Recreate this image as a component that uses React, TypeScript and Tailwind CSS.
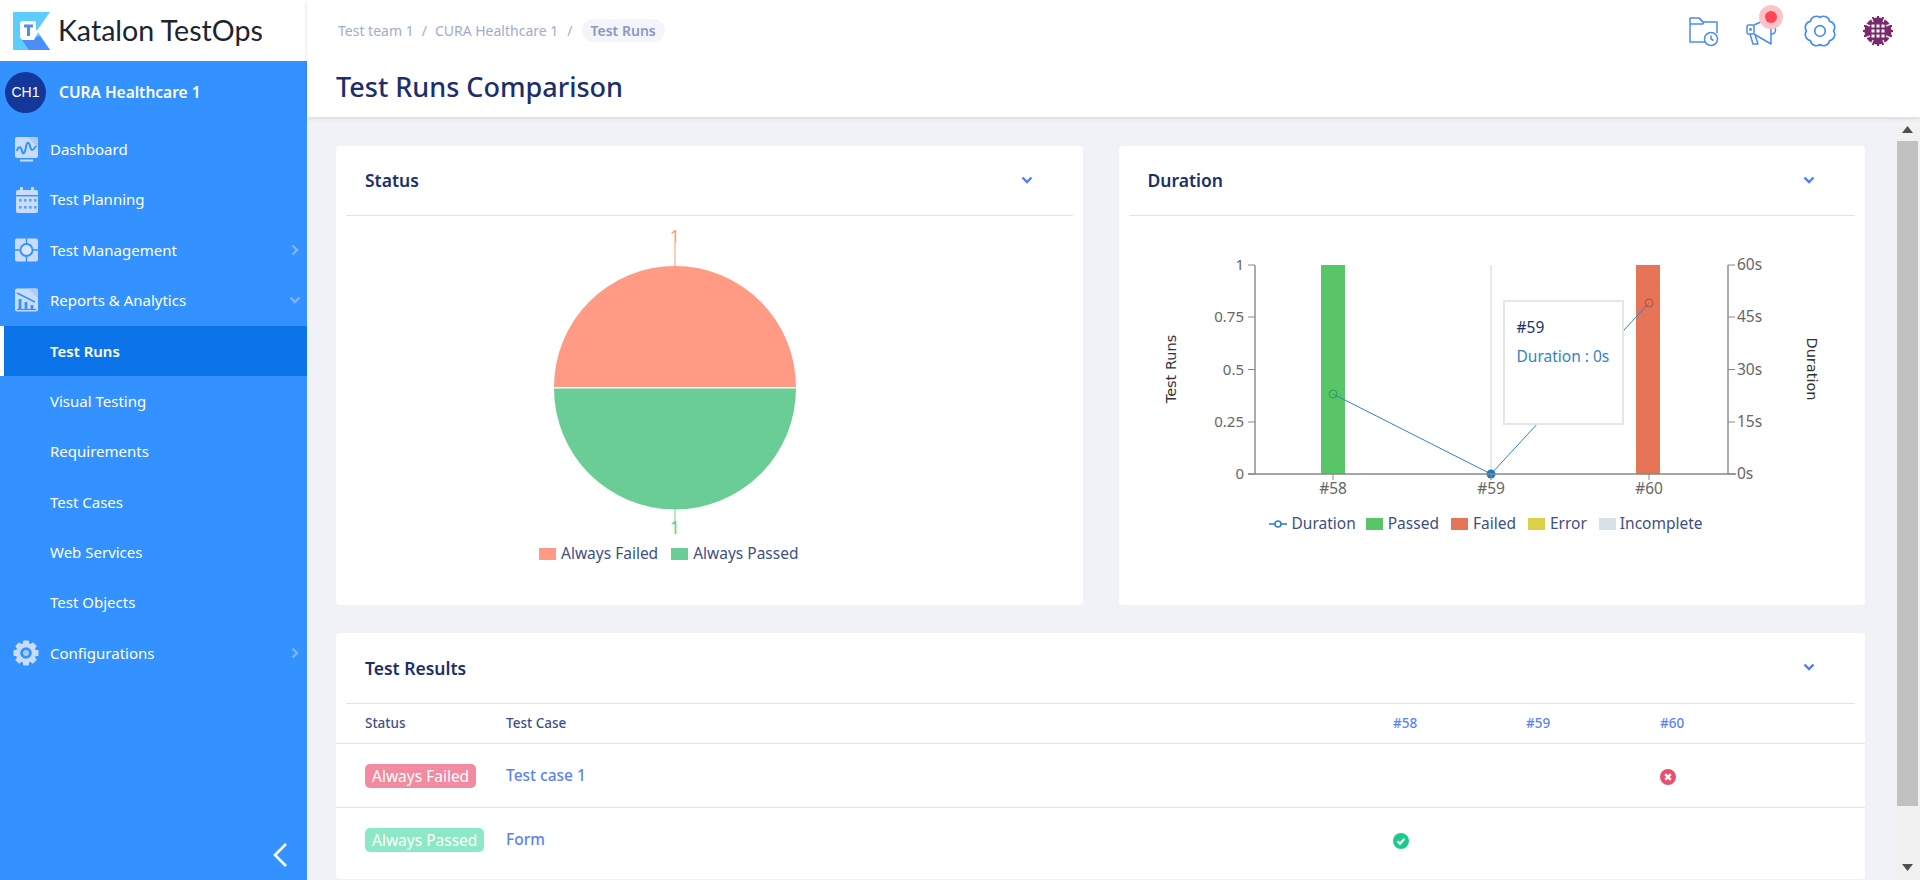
import { ReactNode } from 'react'

const BLUE = '#3392ff'

function DashboardIcon() {
  return (
    <svg width="24" height="26" viewBox="0 0 24 26">
      <rect x="1" y="1" width="23" height="21" rx="2" fill="#c9dcfd" />
      <path d="M14 1h8a2 2 0 0 1 2 2v9z" fill="#aecbfb" />
      <path d="M3 15c1-5 4-5 5 0s3 2 4-4 3-5 4-1 2 6 6 0" fill="none" stroke={BLUE} strokeWidth="2" />
      <rect x="6" y="23.500" width="13" height="2" fill="#c9dcfd" />
    </svg>
  )
}

function CalendarIcon() {
  return (
    <svg width="24" height="26" viewBox="0 0 24 26">
      <rect x="2" y="3" width="22" height="23" rx="2" fill="#c9dcfd" />
      <rect x="6" y="0" width="3" height="6" rx="1" fill="#c9dcfd" />
      <rect x="17" y="0" width="3" height="6" rx="1" fill="#c9dcfd" />
      <rect x="2" y="8" width="22" height="1.400" fill={BLUE} />
      {[13, 20].map((y) =>
        [6, 11, 16, 21].map((x) => <rect key={`${x}-${y}`} x={x - 1} y={y - 1} width="2.600" height="2.600" fill={BLUE} opacity={0.75} />),
      )}
    </svg>
  )
}

function ManagementIcon() {
  return (
    <svg width="24" height="24" viewBox="0 0 24 24">
      <rect x="1" y="0.500" width="23" height="23" rx="2" fill="#c9dcfd" />
      <path d="M1 12h23M12.500 0v24" stroke={BLUE} strokeWidth="1.400" />
      <circle cx="12.500" cy="12" r="6" fill="#d7e5fd" stroke={BLUE} strokeWidth="1.800" />
    </svg>
  )
}

function ReportsIcon() {
  return (
    <svg width="24" height="24" viewBox="0 0 24 24">
      <rect x="1" y="0.500" width="23" height="23" rx="2" fill="#c9dcfd" />
      <path d="M14 0.500h8a2 2 0 0 1 2 2v8z" fill="#aecbfb" />
      <path d="M3 5l18 9" stroke={BLUE} strokeWidth="1.500" />
      <path d="M6 21v-10M12 21v-7M18 21v-4" stroke={BLUE} strokeWidth="2.800" />
      <path d="M3 21.500h19" stroke={BLUE} strokeWidth="1.200" />
    </svg>
  )
}

function GearIcon() {
  return (
    <svg width="26" height="26" viewBox="0 0 26 26">
      <g fill="#c9dcfd">
        {[0, 45, 90, 135, 180, 225, 270, 315].map((a) => (
          <rect key={a} x="10" y="0.500" width="6" height="6" rx="1" transform={`rotate(${a} 13 13)`} />
        ))}
      </g>
      <circle cx="13" cy="13" r="8" fill="none" stroke="#c9dcfd" strokeWidth="4.400" />
      <circle cx="13" cy="13" r="3" fill="#a9c9fb" />
    </svg>
  )
}

type MenuItem = { label: string; icon?: ReactNode; chevron?: 'right' | 'down'; active?: boolean }

const menu: MenuItem[] = [
  { label: 'Dashboard', icon: <DashboardIcon /> },
  { label: 'Test Planning', icon: <CalendarIcon /> },
  { label: 'Test Management', icon: <ManagementIcon />, chevron: 'right' },
  { label: 'Reports & Analytics', icon: <ReportsIcon />, chevron: 'down' },
  { label: 'Test Runs', active: true },
  { label: 'Visual Testing' },
  { label: 'Requirements' },
  { label: 'Test Cases' },
  { label: 'Web Services' },
  { label: 'Test Objects' },
  { label: 'Configurations', icon: <GearIcon />, chevron: 'right' },
]

function Logo() {
  return (
    <svg width="37" height="38" viewBox="0 0 37 38">
      <path d="M0 0H37L24 18.500 37 38H0z" fill="#5ccdfd" />
      <path d="M9 28L27 24 37 38H16z" fill="#4d8dfb" />
      <path d="M10 9h11a3 3 0 0 1 2 1v8l3 1-3 5-2 4H11a4 4 0 0 1-4-4V12a3 3 0 0 1 3-3z" fill="#ffffff" />
      <path d="M11 12.500h9v3h-3v8.500h-3v-8.500h-3z" fill="#4d8dfb" />
    </svg>
  )
}

function Sidebar() {
  return (
    <aside className="flex h-[880px] w-[307px] shrink-0 flex-col">
      <div className="flex h-[61px] items-center gap-[8px] bg-white pl-[13px]">
        <Logo />
        <span className="font-['Lato'] text-[28.6px] text-[#1c2430]">Katalon TestOps</span>
      </div>
      <nav className="relative flex-1 bg-[#3392ff] text-white">
        <div className="flex h-[63px] items-center gap-[13px] pl-[5px]">
          <div className="flex h-[41px] w-[41px] items-center justify-center rounded-full bg-[#14379a] font-['Liberation_Sans'] text-[14px] text-white">
            CH1
          </div>
          <span className="text-[15.5px] font-semibold">CURA Healthcare 1</span>
        </div>
        {menu.map((item) => (
          <div
            key={item.label}
            className={
              item.active
                ? 'relative flex h-[50.4px] items-center border-l-4 border-white bg-[#0a74e8] pl-[46px] text-[15px] font-semibold'
                : 'relative flex h-[50.4px] items-center pl-[50px] text-[15px]'
            }
          >
            {item.icon && <span className="absolute left-[13px] flex h-[26px] w-[26px] items-center justify-center">{item.icon}</span>}
            {item.label}
            {item.chevron === 'right' && (
              <svg className="absolute right-[8px]" width="8" height="12" viewBox="0 0 8 12">
                <path d="M1.500 1.500L6 6l-4.500 4.500" fill="none" stroke="#7fb5fc" strokeWidth="2.400" />
              </svg>
            )}
            {item.chevron === 'down' && (
              <svg className="absolute right-[6px]" width="12" height="8" viewBox="0 0 12 8">
                <path d="M1.500 1.500L6 6l4.500-4.500" fill="none" stroke="#7fb5fc" strokeWidth="2.400" />
              </svg>
            )}
          </div>
        ))}
        <svg className="absolute bottom-[12px] left-[271px]" width="18" height="26" viewBox="0 0 18 26">
          <path d="M15 2L4 13l11 11" fill="none" stroke="#ffffff" strokeWidth="2.600" />
        </svg>
      </nav>
    </aside>
  )
}

function Identicon() {
  return (
    <svg width="32" height="32" viewBox="0 0 32 32">
      <circle cx="16" cy="16" r="13.500" fill="#7a2a6b" />
      <path d="M11 2v28M16 1v30M21 2v28M2 11h28M1 16h30M2 21h28" stroke="#7a2a6b" strokeWidth="2" />
      <g stroke="#ffffff" strokeWidth="1.500" opacity={0.85}>
        <path d="M3 9l5 2M9 2l2 5M23 2l-2 5M29 9l-5 2M3 23l5-2M9 30l2-5M23 30l-2-5M29 23l-5-2" />
      </g>
      <g fill="#ffffff">
        {[9.500, 14.500, 19.500].map((x) =>
          [9.500, 14.500, 19.500].map((y) => <rect key={`${x}-${y}`} x={x} y={y} width="3" height="3" />),
        )}
      </g>
    </svg>
  )
}

function TopIcons() {
  return (
    <div className="flex items-center gap-[26px]">
      <svg width="32" height="32" viewBox="0 0 32 32" fill="none" stroke="#4a8cf7" strokeWidth="1.500" strokeLinejoin="round">
        <path d="M17 27H2V3h9l4 4h14v11" />
        <path d="M2 9h13l1-2M11 3l4 4" />
        <circle cx="23" cy="24" r="6.500" fill="#ffffff" />
        <path d="M23 20.500V24l2.500 1.500" />
      </svg>
      <div className="relative h-[32px] w-[32px]">
        <svg width="32" height="32" viewBox="0 0 32 32" fill="none" stroke="#4a8cf7" strokeWidth="1.500" strokeLinejoin="round">
          <rect x="1" y="10" width="7" height="9" rx="1.500" />
          <path d="M8 10L25 2.500V29L8 19" />
          <path d="M25 10.500c3 0 4.500 2 4.500 4.500s-2 4-4.500 4" />
          <path d="M4 19l3 10h5l-3-9.500" />
          <circle cx="4.500" cy="14.500" r="0.700" fill="#4a8cf7" />
        </svg>
        <span className="absolute left-[13px] top-[-10px] flex h-[24px] w-[24px] items-center justify-center rounded-full bg-[#ffc2c6]">
          <span className="h-[12px] w-[12px] rounded-full bg-[#ff4652]" />
        </span>
      </div>
      <svg width="32" height="32" viewBox="0 0 32 32" fill="none" stroke="#4a8cf7" strokeWidth="1.700" strokeLinejoin="round">
        <path d="M16 2.500A6 6 0 0 1 25.550 6.450A6 6 0 0 1 29.500 16A6 6 0 0 1 25.550 25.550A6 6 0 0 1 16 29.500A6 6 0 0 1 6.450 25.550A6 6 0 0 1 2.500 16A6 6 0 0 1 6.450 6.450A6 6 0 0 1 16 2.500z" />
        <circle cx="16" cy="16" r="5.300" />
      </svg>
      <Identicon />
    </div>
  )
}

function Header() {
  return (
    <header className="relative z-10 h-[117px] shrink-0 bg-white shadow-[0_1px_4px_rgba(40,50,90,0.15)]">
      <div className="flex h-[61px] items-center justify-between pl-[31px] pr-[26px]">
        <div className="flex items-center text-[14px] text-[#a2acca]">
          <span>Test team 1</span>
          <span className="mx-[8px]">/</span>
          <span>CURA Healthcare 1</span>
          <span className="mx-[9px]">/</span>
          <span className="rounded-full bg-[#f4f5fa] px-[9px] py-[1px] font-semibold text-[#8c98bd]">Test Runs</span>
        </div>
        <TopIcons />
      </div>
      <h1 className="pl-[29px] text-[27px] leading-[52px] font-medium text-[#1c2f6b]">Test Runs Comparison</h1>
    </header>
  )
}

function Chevron() {
  return (
    <svg width="12" height="8" viewBox="0 0 12 8" className="mb-[2px]">
      <path d="M1.500 1.500L6 6l4.500-4.500" fill="none" stroke="#4d7cfe" strokeWidth="2.400" />
    </svg>
  )
}

function Card({ title, children }: { title: string; children: ReactNode }) {
  return (
    <section className="rounded-[4px] bg-white">
      <div className="mx-[10px] flex h-[70px] items-center justify-between border-b border-[#dfe1ec] pl-[19px] pr-[40px]">
        <h2 className="text-[17.5px] font-semibold text-[#1c2f6b]">{title}</h2>
        <Chevron />
      </div>
      {children}
    </section>
  )
}

function Swatch({ color }: { color: string }) {
  return <span className="h-[12px] w-[17px]" style={{ backgroundColor: color }} />
}

function StatusChart() {
  return (
    <div className="h-[389px]">
      <svg width="747" height="328" viewBox="0 0 747 328" className="block">
        <path d="M218 171a121 121 0 0 1 242 0z" fill="#ff9a84" />
        <path d="M218 172.500a121 121 0 0 0 242 0z" fill="#6bcd96" />
        <path d="M339 27v23" stroke="#ffb8a8" strokeWidth="1.500" />
        <path d="M339 293v16" stroke="#9bdfba" strokeWidth="1.500" />
        <text x="339" y="27" textAnchor="middle" fontSize="18" fill="#ff9a84">1</text>
        <text x="339" y="318" textAnchor="middle" fontSize="18" fill="#6bcd96">1</text>
      </svg>
      <div className="flex h-[20px] items-center gap-[5px] pl-[203px] text-[15.5px] text-[#3d4f86]">
        <Swatch color="#ff9a84" />
        <span className="mr-[8px]">Always Failed</span>
        <Swatch color="#6bcd96" />
        <span>Always Passed</span>
      </div>
    </div>
  )
}

const leftTicks = [
  { label: '1', y: 49 },
  { label: '0.75', y: 101 },
  { label: '0.5', y: 153.500 },
  { label: '0.25', y: 206 },
  { label: '0', y: 258 },
]
const rightTicks = [
  { label: '60s', y: 49 },
  { label: '45s', y: 101 },
  { label: '30s', y: 153.500 },
  { label: '15s', y: 206 },
  { label: '0s', y: 258 },
]
const runs = [
  { label: '#58', x: 214 },
  { label: '#59', x: 372 },
  { label: '#60', x: 530 },
]

function DurationChart() {
  return (
    <div className="relative h-[389px]">
      <svg width="746" height="290" viewBox="0 0 746 290" className="block">
        <line x1="372" y1="49" x2="372" y2="258" stroke="#d0d0d0" />
        <rect x="202" y="49" width="24" height="209" fill="#58c566" />
        <rect x="517" y="49" width="24" height="209" fill="#e57556" />
        <polyline points="214,178 372,258 530,87" fill="none" stroke="#2f84c4" strokeWidth="1" />
        <circle cx="214" cy="178" r="4" fill="none" stroke="#2b9d55" />
        <circle cx="530" cy="87" r="4" fill="none" stroke="#a5533f" />
        <circle cx="372" cy="258" r="4.500" fill="#1f78c1" />
        <path d="M136 49v209M609 49v209M129 258h488" stroke="#888888" strokeWidth="1.400" fill="none" />
        {leftTicks.map((t) => (
          <g key={t.label}>
            <line x1="129" x2="136" y1={t.y} y2={t.y} stroke="#888888" />
            <text x="125" y={t.y + 5} textAnchor="end" fontSize="15" fill="#666666">{t.label}</text>
          </g>
        ))}
        {rightTicks.map((t) => (
          <g key={t.label}>
            <line x1="609" x2="616" y1={t.y} y2={t.y} stroke="#888888" />
            <text x="618" y={t.y + 5} fontSize="15.500" fill="#666666">{t.label}</text>
          </g>
        ))}
        {runs.map((r) => (
          <g key={r.label}>
            <line x1={r.x} x2={r.x} y1="258" y2="264" stroke="#888888" />
            <text x={r.x} y="278" textAnchor="middle" fontSize="15.500" fill="#666666">{r.label}</text>
          </g>
        ))}
        <text transform="translate(57 153) rotate(-90)" textAnchor="middle" fontSize="14.500" fontFamily="DejaVu Sans" fill="#333333">Test Runs</text>
        <text transform="translate(688 153) rotate(90)" textAnchor="middle" fontSize="14.500" fontFamily="DejaVu Sans" fill="#333333">Duration</text>
      </svg>
      <div className="absolute left-[384px] top-[84px] h-[125px] w-[121px] border-2 border-[#e6e6e6] bg-white pl-[12px] pt-[11px] text-[15.5px] leading-[29px]">
        <div className="text-[#1c2f6b]">#59</div>
        <div className="text-[#2f84c4]">Duration : 0s</div>
      </div>
      <div className="mt-[8px] flex h-[20px] items-center pl-[150px] text-[15.5px] text-[#3d4f86]">
        <svg width="18" height="12" viewBox="0 0 18 12" className="mr-[5px]">
          <path d="M0 6h18" stroke="#2f84c4" strokeWidth="1.600" />
          <circle cx="9" cy="6" r="3" fill="#ffffff" stroke="#2f84c4" strokeWidth="1.600" />
        </svg>
        <span className="mr-[10px]">Duration</span>
        <Swatch color="#58c566" />
        <span className="ml-[5px] mr-[12px]">Passed</span>
        <Swatch color="#e57556" />
        <span className="ml-[5px] mr-[12px]">Failed</span>
        <Swatch color="#dcd24a" />
        <span className="ml-[5px] mr-[12px]">Error</span>
        <Swatch color="#d9e1e8" />
        <span className="ml-[4px]">Incomplete</span>
      </div>
    </div>
  )
}

function FailedIcon() {
  return (
    <svg width="16" height="16" viewBox="0 0 16 16" className="mt-[2px]">
      <circle cx="8" cy="8" r="8" fill="#e8506c" />
      <path d="M5.200 5.200l5.600 5.600M10.800 5.200l-5.600 5.600" stroke="#ffffff" strokeWidth="2.400" />
    </svg>
  )
}

function PassedIcon() {
  return (
    <svg width="16" height="16" viewBox="0 0 16 16" className="mt-[2px]">
      <circle cx="8" cy="8" r="8" fill="#1cc98f" />
      <path d="M4.500 8.200l2.500 2.500 4.500-5" fill="none" stroke="#ffffff" strokeWidth="2.200" />
    </svg>
  )
}

function TestResults() {
  const cols = 'grid grid-cols-[141px_887px_133px_134px_1fr] items-center pl-[29px]'
  return (
    <section className="mt-[28px] h-[246px] rounded-[4px] bg-white">
      <div className="mx-[10px] flex h-[71px] items-center justify-between border-b border-[#dfe1ec] pl-[19px] pr-[40px]">
        <h2 className="text-[17.5px] font-semibold text-[#1c2f6b]">Test Results</h2>
        <Chevron />
      </div>
      <div className={`${cols} h-[40px] border-b border-[#dfe1ec] text-[13.5px] font-medium text-[#3f5088]`}>
        <span>Status</span>
        <span>Test Case</span>
        <span className="text-[#5a82fb]">#58</span>
        <span className="text-[#5a82fb]">#59</span>
        <span className="text-[#5a82fb]">#60</span>
      </div>
      <div className={`${cols} h-[64px] border-b border-[#dfe1ec] text-[15.5px]`}>
        <span className="w-fit rounded-[5px] bg-[#f28b9f] px-[7px] leading-[24px] text-white">Always Failed</span>
        <span className="font-medium text-[#5a82fb]">Test case 1</span>
        <span />
        <span />
        <FailedIcon />
      </div>
      <div className={`${cols} h-[64px] text-[15.5px]`}>
        <span className="w-fit rounded-[5px] bg-[#8de8c6] px-[7px] leading-[24px] text-white">Always Passed</span>
        <span className="font-medium text-[#5a82fb]">Form</span>
        <PassedIcon />
      </div>
    </section>
  )
}

function Scrollbar() {
  return (
    <div className="flex w-[26px] shrink-0 flex-col items-center bg-[#f1f1f1] pl-[1px]">
      <svg className="mt-[9px]" width="11" height="7" viewBox="0 0 11 7">
        <path d="M5.500 0L11 7H0z" fill="#505050" />
      </svg>
      <div className="mt-[8px] h-[665px] w-[21px] bg-[#c1c1c1]" />
      <svg className="mt-[58px]" width="11" height="7" viewBox="0 0 11 7">
        <path d="M5.500 7L11 0H0z" fill="#505050" />
      </svg>
    </div>
  )
}

export default function App() {
  return (
    <div className="flex h-[880px] w-[1920px] overflow-hidden bg-[#f0f2f7] font-['Noto_Sans',sans-serif]">
      <Sidebar />
      <div className="flex min-w-0 flex-1 flex-col">
        <Header />
        <div className="flex min-h-0 flex-1">
          <main className="min-w-0 flex-1 overflow-hidden p-[29px]">
            <div className="grid grid-cols-2 gap-x-[36px]">
              <Card title="Status">
                <StatusChart />
              </Card>
              <Card title="Duration">
                <DurationChart />
              </Card>
            </div>
            <TestResults />
          </main>
          <Scrollbar />
        </div>
      </div>
    </div>
  )
}
